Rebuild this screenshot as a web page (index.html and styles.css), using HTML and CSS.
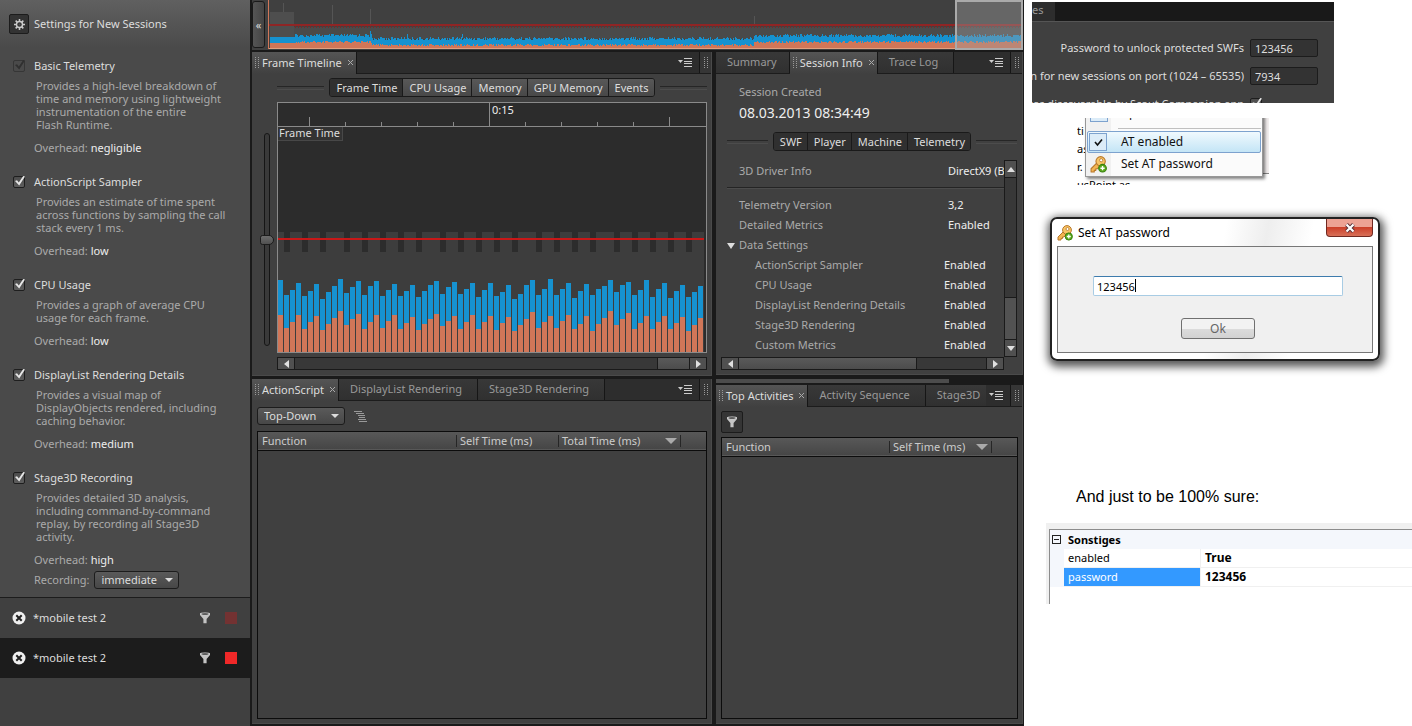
FILE: index.html
```html
<!DOCTYPE html>
<html lang="en">
<head>
    <meta charset="UTF-8">
    <meta name="viewport" content="width=device-width, initial-scale=1.0">
    <title>Session Telemetry</title>
    <link rel="stylesheet" href="styles.css">
</head>
<body>
    <svg class="defs" width="0" height="0" aria-hidden="true">
        <symbol id="gear" viewBox="0 0 12 12">
            <path d="M6 0v12M0 6h12M1.8 1.8l8.4 8.4M10.2 1.8l-8.4 8.4" stroke="#ccc" stroke-width="1.7"/>
            <circle cx="6" cy="6" r="3.3" fill="#333" stroke="#ccc" stroke-width="1.6"/>
            <circle cx="6" cy="6" r="1" fill="#555"/>
        </symbol>
        <symbol id="funnel" viewBox="0 0 12 12">
            <path d="M1 1.5h10v1.6L7.6 7v4.2H4.4V7L1 3.1z" fill="#c4c4c4"/>
            <ellipse cx="6" cy="1.8" rx="5" ry="1.4" fill="#d8d8d8"/>
            <ellipse cx="6" cy="2" rx="3.8" ry=".7" fill="#333"/>
        </symbol>
        <symbol id="remove" viewBox="0 0 14 14">
            <circle cx="7" cy="7" r="6.5" fill="#f0f0f0"/>
            <path d="M4.3 4.3l5.4 5.4M9.7 4.3L4.3 9.7" stroke="#222" stroke-width="2"/>
        </symbol>
        <symbol id="menu" viewBox="0 0 14 9">
            <path d="M0 2h5L2.500 5z" fill="#ccc"/>
            <path d="M6 .5h8M6 3.500h8M6 5.500h8M6 8.500h8" stroke="#ccc"/>
        </symbol>
        <symbol id="grip" viewBox="0 0 4 11">
            <path d="M.5 0v11M3.500 0v11" stroke="#999" stroke-dasharray="1 1"/>
        </symbol>
        <symbol id="close" viewBox="0 0 5 5">
            <path d="M0 0l5 5M5 0L0 5" stroke="#aaa"/>
        </symbol>
        <symbol id="key" viewBox="0 0 16 16">
            <path d="M6.500 6.500L1 12v3h3v-1.500h1.500V12H7l2.500-3" fill="#f3b552" stroke="#b8772a" stroke-linejoin="round"/>
            <circle cx="10" cy="5" r="4.400" fill="#f8c566" stroke="#b8772a"/>
            <circle cx="10.500" cy="4" r="1.500" fill="#fff" stroke="#b8772a" stroke-width=".8"/>
            <circle cx="11.800" cy="11.500" r="3.600" fill="#5aa91c" stroke="#36800c"/>
            <path d="M11.800 9.500v4M9.800 11.500h4" stroke="#fff" stroke-width="1.300"/>
        </symbol>
    </svg>

    <aside class="sidebar">
        <header class="sidebar-head">
            <button type="button" class="gear-button" aria-label="Settings"><svg width="11" height="11"><use href="#gear"/></svg></button>
            <span>Settings for New Sessions</span>
        </header>

        <section class="option">
            <label><input type="checkbox" class="tick" checked disabled>Basic Telemetry</label>
            <p>Provides a high-level breakdown of<br>time and memory using lightweight<br>instrumentation of the entire<br>Flash Runtime.</p>
            <div class="overhead">Overhead: <b>negligible</b></div>
        </section>
        <section class="option">
            <label><input type="checkbox" class="tick" checked>ActionScript Sampler</label>
            <p>Provides an estimate of time spent<br>across functions by sampling the call<br>stack every 1 ms.</p>
            <div class="overhead">Overhead: <b>low</b></div>
        </section>
        <section class="option">
            <label><input type="checkbox" class="tick" checked>CPU Usage</label>
            <p>Provides a graph of average CPU<br>usage for each frame.</p>
            <div class="overhead">Overhead: <b>low</b></div>
        </section>
        <section class="option">
            <label><input type="checkbox" class="tick" checked>DisplayList Rendering Details</label>
            <p>Provides a visual map of<br>DisplayObjects rendered, including<br>caching behavior.</p>
            <div class="overhead">Overhead: <b>medium</b></div>
        </section>
        <section class="option last">
            <label><input type="checkbox" class="tick" checked>Stage3D Recording</label>
            <p>Provides detailed 3D analysis,<br>including command-by-command<br>replay, by recording all Stage3D<br>activity.</p>
            <div class="overhead">Overhead: <b>high</b></div>
            <div class="recording">
                <label for="recording">Recording:</label>
                <span class="select"><select id="recording"><option>immediate</option><option>deferred</option></select></span>
            </div>
        </section>

        <ul class="sessions">
            <li>
                <button type="button" class="icon-button" aria-label="Remove"><svg width="14" height="14"><use href="#remove"/></svg></button>
                <span class="session-name">*mobile test 2</span>
                <svg width="12" height="12"><use href="#funnel"/></svg>
                <i class="record"></i>
            </li>
            <li class="active">
                <button type="button" class="icon-button" aria-label="Remove"><svg width="14" height="14"><use href="#remove"/></svg></button>
                <span class="session-name">*mobile test 2</span>
                <svg width="12" height="12"><use href="#funnel"/></svg>
                <i class="record on"></i>
            </li>
        </ul>
    </aside>

    <main class="workspace">
        <div class="overview">
            <button type="button" class="collapse" aria-label="Collapse">«</button>
            <div class="overview-chart">
                <svg id="overview" viewBox="0 0 755 50" preserveAspectRatio="none" shape-rendering="crispEdges"></svg>
                <div class="overview-window"></div>
            </div>
        </div>

        <div class="column">
            <section class="panel timeline">
                <nav class="tabs">
                    <div class="tab-list">
                        <button type="button" class="tab active"><svg width="4" height="11"><use href="#grip"/></svg>Frame Timeline<svg class="x" width="5" height="5"><use href="#close"/></svg></button>
                    </div>
                    <button type="button" class="icon-button" aria-label="Panel menu"><svg width="14" height="9"><use href="#menu"/></svg></button>
                    <span class="tab-grip"><svg width="4" height="11"><use href="#grip"/></svg></span>
                </nav>
                <div class="timeline-body">
                    <div class="slider"><input type="range" aria-label="Zoom" min="0" max="100" value="50"></div>
                    <div class="timeline-main">
                        <div class="segments wide">
                            <div class="group">
                                <button type="button" class="on">Frame Time</button>
                                <button type="button">CPU Usage</button>
                                <button type="button">Memory</button>
                                <button type="button">GPU Memory</button>
                                <button type="button">Events</button>
                            </div>
                        </div>
                        <div class="chart">
                            <div class="ruler">
                                <svg id="ruler" viewBox="0 0 428 23" preserveAspectRatio="none" shape-rendering="crispEdges"></svg>
                                <span class="time">0:15</span>
                            </div>
                            <div class="plot">
                                <svg id="frames" viewBox="0 0 428 225" preserveAspectRatio="none" shape-rendering="crispEdges"></svg>
                                <span class="chart-label">Frame Time</span>
                            </div>
                        </div>
                        <div class="hscroll right">
                            <button type="button" aria-label="Scroll left"><i class="arrow left"></i></button>
                            <span class="rail"><span class="thumb"></span></span>
                            <button type="button" aria-label="Scroll right"><i class="arrow right"></i></button>
                        </div>
                    </div>
                </div>
            </section>

            <section class="panel functions">
                <nav class="tabs">
                    <div class="tab-list">
                        <button type="button" class="tab active"><svg width="4" height="11"><use href="#grip"/></svg>ActionScript<svg class="x" width="5" height="5"><use href="#close"/></svg></button>
                        <button type="button" class="tab">DisplayList Rendering</button>
                        <button type="button" class="tab">Stage3D Rendering</button>
                    </div>
                    <button type="button" class="icon-button" aria-label="Panel menu"><svg width="14" height="9"><use href="#menu"/></svg></button>
                    <span class="tab-grip"><svg width="4" height="11"><use href="#grip"/></svg></span>
                </nav>
                <div class="toolbar">
                    <span class="select"><select aria-label="Order"><option>Top-Down</option><option>Bottom-Up</option></select></span>
                    <svg width="13" height="11" viewBox="0 0 13 11"><path d="M0 .5h8M2 2.500h8M4 4.500h7M5 6.500h6M4 8.500h8M5 10.500h8" stroke="#999"/></svg>
                </div>
                <div class="grid-frame">
                    <table>
                        <colgroup><col><col class="c102"><col class="c122"><col class="c26"></colgroup>
                        <thead><tr><th>Function</th><th>Self Time (ms)</th><th class="sorted">Total Time (ms)</th><th></th></tr></thead>
                        <tbody></tbody>
                    </table>
                </div>
            </section>
        </div>

        <div class="column">
            <section class="panel info">
                <nav class="tabs">
                    <div class="tab-list">
                        <button type="button" class="tab narrow">Summary</button>
                        <button type="button" class="tab active"><svg width="4" height="11"><use href="#grip"/></svg>Session Info<svg class="x" width="5" height="5"><use href="#close"/></svg></button>
                        <button type="button" class="tab">Trace Log</button>
                    </div>
                    <button type="button" class="icon-button" aria-label="Panel menu"><svg width="14" height="9"><use href="#menu"/></svg></button>
                    <span class="tab-grip"><svg width="4" height="11"><use href="#grip"/></svg></span>
                </nav>
                <div class="created">
                    <span>Session Created</span>
                    <strong>08.03.2013 08:34:49</strong>
                </div>
                <div class="segments dark">
                    <div class="group">
                        <button type="button">SWF</button>
                        <button type="button">Player</button>
                        <button type="button">Machine</button>
                        <button type="button">Telemetry</button>
                    </div>
                </div>
                <div class="scroll-area">
                    <div class="info-rows">
                        <table class="driver"><tbody>
                            <tr><th>3D Driver Info</th><td>DirectX9 (BGRA)</td></tr>
                        </tbody></table>
                        <table><tbody>
                            <tr><th>Telemetry Version</th><td>3,2</td></tr>
                            <tr><th>Detailed Metrics</th><td>Enabled</td></tr>
                            <tr class="open"><th>Data Settings</th><td></td></tr>
                            <tr class="sub"><th>ActionScript Sampler</th><td>Enabled</td></tr>
                            <tr class="sub"><th>CPU Usage</th><td>Enabled</td></tr>
                            <tr class="sub"><th>DisplayList Rendering Details</th><td>Enabled</td></tr>
                            <tr class="sub"><th>Stage3D Rendering</th><td>Enabled</td></tr>
                            <tr class="sub"><th>Custom Metrics</th><td>Enabled</td></tr>
                        </tbody></table>
                    </div>
                    <div class="vscroll">
                        <button type="button" aria-label="Scroll up"><i class="arrow up"></i></button>
                        <span class="rail"><span class="thumb"></span></span>
                        <button type="button" aria-label="Scroll down"><i class="arrow down"></i></button>
                    </div>
                    <div class="hscroll">
                        <button type="button" aria-label="Scroll left"><i class="arrow left"></i></button>
                        <span class="rail"><span class="thumb"></span></span>
                        <button type="button" aria-label="Scroll right"><i class="arrow right"></i></button>
                    </div>
                </div>
            </section>

            <div class="tab-scroll"></div>

            <section class="panel activities">
                <nav class="tabs">
                    <div class="tab-list">
                        <button type="button" class="tab active"><svg width="4" height="11"><use href="#grip"/></svg>Top Activities<svg class="x" width="5" height="5"><use href="#close"/></svg></button>
                        <button type="button" class="tab">Activity Sequence</button>
                        <button type="button" class="tab cut">Stage3D</button>
                    </div>
                    <button type="button" class="icon-button" aria-label="Panel menu"><svg width="14" height="9"><use href="#menu"/></svg></button>
                    <span class="tab-grip"><svg width="4" height="11"><use href="#grip"/></svg></span>
                </nav>
                <div class="toolbar">
                    <button type="button" class="filter" aria-label="Filter"><svg width="12" height="12"><use href="#funnel"/></svg></button>
                </div>
                <div class="grid-frame">
                    <table>
                        <colgroup><col><col class="c102"><col class="c26"></colgroup>
                        <thead><tr><th>Function</th><th class="sorted">Self Time (ms)</th><th></th></tr></thead>
                        <tbody></tbody>
                    </table>
                </div>
            </section>
        </div>
    </main>

    <div class="notes">
        <section class="prefs">
            <div class="prefs-tabs"><span>es</span></div>
            <div class="prefs-row">
                <label for="unlock">Password to unlock protected SWFs</label>
                <input type="text" id="unlock" value="123456">
            </div>
            <div class="prefs-row">
                <label for="port">Listen for new sessions on port (1024 – 65535)</label>
                <input type="text" id="port" value="7934">
            </div>
            <div class="prefs-row">
                <label for="discover">Devices discoverable by Scout Companion app</label>
                <span class="tick-cell"><input type="checkbox" id="discover" class="tick" checked></span>
            </div>
        </section>

        <section class="tray">
            <div class="tray-text">ti<br>as<br>r.<br>usPoint as</div>
            <div class="tray-side"></div>
            <div class="menu">
                <div class="menu-item cut-item"><i class="box"></i><span>Xp</span></div>
                <hr>
                <button type="button" class="menu-item hot"><i class="box"><svg width="9" height="9" viewBox="0 0 9 9"><path d="M1 4l2.500 3L8 1.500" fill="none" stroke="#111" stroke-width="1.600"/></svg></i><span>AT enabled</span></button>
                <button type="button" class="menu-item"><svg width="17" height="17"><use href="#key"/></svg><span>Set AT password</span></button>
            </div>
        </section>

        <section class="dialog">
            <header>
                <svg width="16" height="16"><use href="#key"/></svg>
                <span>Set AT password</span>
                <button type="button" class="dialog-close" aria-label="Close"><svg width="12" height="10" viewBox="0 0 12 10"><path d="M2.500 1.500l7 7M9.500 1.500l-7 7" stroke="#5a3038" stroke-width="4"/><path d="M2.500 1.500l7 7M9.500 1.500l-7 7" stroke="#fff" stroke-width="2.200"/></svg></button>
            </header>
            <div class="dialog-body">
                <div class="field"><input type="text" aria-label="AT password" value="123456"><i class="caret"></i></div>
                <button type="button">Ok</button>
            </div>
        </section>

        <p class="note">And just to be 100% sure:</p>

        <div class="properties">
            <table>
                <colgroup><col class="c14"><col class="c137"><col></colgroup>
                <tbody>
                    <tr class="category"><td class="gutter"><i></i></td><th colspan="2">Sonstiges</th></tr>
                    <tr><td class="gutter"></td><td class="name">enabled</td><td class="value">True</td></tr>
                    <tr class="selected"><td class="gutter"></td><td class="name">password</td><td class="value">123456</td></tr>
                </tbody>
            </table>
        </div>
    </div>

    <script src="script.js"></script>
</body>
</html>
```
FILE: styles.css
```css
* {
    box-sizing: border-box;
}
body {
    margin: 0;
    min-height: 100vh;
    display: flex;
    background: #fff;
    color: #ddd;
    font-family: "Noto Sans", "Open Sans", sans-serif;
    font-size: 11px;
    line-height: 16px;
}
.defs {
    position: absolute;
}
svg {
    display: block;
    flex: none;
}
button, select, input {
    font: inherit;
    color: inherit;
    margin: 0;
}
button {
    padding: 0;
    border: 0;
    background: none;
    cursor: pointer;
}
.icon-button {
    flex: none;
}

/* sidebar */
.sidebar {
    flex: none;
    width: 250px;
    background: #404040;
}
.sidebar-head {
    display: flex;
    align-items: center;
    gap: 5px;
    height: 48px;
    padding-left: 9px;
    background: linear-gradient(#606060, #4a4a4a);
}
.gear-button {
    display: flex;
    align-items: center;
    justify-content: center;
    width: 20px;
    height: 20px;
    border: 1px solid #1c1c1c;
    border-radius: 2px;
    background: #333;
}
.option {
    padding: 0 0 18px 34px;
    background: #4a4a4a;
    color: #aaa;
}
.sidebar-head + .option {
    padding-top: 10px;
}
.option.last {
    padding-bottom: 7px;
    border-bottom: 1px solid #1c1c1c;
}
.option > label {
    display: flex;
    align-items: center;
    gap: 9px;
    margin-left: -21px;
    color: #ddd;
}
.option p {
    margin: 5px 0 9px 2px;
    line-height: 13px;
}
.overhead b {
    font-weight: normal;
    color: #eee;
}
.tick {
    appearance: none;
    flex: none;
    position: relative;
    width: 12px;
    height: 12px;
    border: 1px solid #1e1e1e;
    border-radius: 2px;
    background: linear-gradient(#4c4c4c, #5e5e5e);
}
.tick:checked::after {
    content: "";
    position: absolute;
    left: 1px;
    top: -1px;
    width: 10px;
    height: 10px;
    background: #e6e6e6;
    clip-path: polygon(0 50%, 20% 42%, 38% 66%, 82% 0, 100% 4%, 42% 95%);
}
.tick:disabled {
    border-color: #363636;
    background: #4a4a4a;
}
.tick:disabled::after {
    background: #303030;
}
.recording {
    display: flex;
    align-items: center;
    gap: 5px;
    height: 20px;
    margin-top: 2px;
}
.select {
    position: relative;
    display: inline-flex;
}
.select select {
    appearance: none;
    width: 85px;
    height: 18px;
    padding: 0 6px;
    border: 1px solid #1c1c1c;
    border-radius: 3px;
    background: linear-gradient(#5a5a5a, #474747);
    color: #ddd;
    line-height: 14px;
}
.select::after {
    content: "";
    position: absolute;
    right: 6px;
    top: 7px;
    border: 4px solid transparent;
    border-top-color: #ddd;
    border-bottom: 0;
}
.sessions {
    margin: 0;
    padding: 0;
    list-style: none;
}
.sessions li {
    display: flex;
    align-items: center;
    height: 40px;
    padding: 0 13px 0 12px;
}
.sessions .active {
    background: #1c1c1c;
}
.session-name {
    flex: 1;
    margin-left: 7px;
}
.record {
    width: 12px;
    height: 12px;
    margin-left: 14px;
    background: #733232;
}
.record.on {
    background: #f02828;
}

/* workspace */
.workspace {
    flex: 1;
    min-width: 0;
    display: grid;
    grid-template: auto 1fr / minmax(0, 1fr) 307px;
    column-gap: 4px;
    padding: 0 1px 2px 2px;
    background: #1a1a1a;
}
.overview {
    grid-column: 1 / -1;
    display: flex;
    height: 50px;
    gap: 3px;
    background: #404040;
}
.collapse {
    width: 13px;
    height: 47px;
    margin-top: 1px;
    border: 1px solid #1a1a1a;
    border-radius: 3px;
    background: linear-gradient(90deg, #555, #444);
}
.overview-chart {
    flex: 1;
    position: relative;
}
.overview-chart svg, .ruler svg, .plot svg {
    width: 100%;
    height: 100%;
}
.overview-window {
    position: absolute;
    inset: 0 0 0 auto;
    width: 9%;
    border: 2px solid #aaa;
    background: rgba(160, 160, 160, 0.4);
}
.column {
    display: flex;
    flex-direction: column;
    min-width: 0;
    padding-top: 2px;
}
.panel {
    border-right: 1px solid #4a4a4a;
    border-bottom: 1px solid #4a4a4a;
    background: #404040;
}
.tabs {
    flex: none;
    display: flex;
    align-items: center;
    height: 22px;
    background: #2d2d2d;
    border-bottom: 1px solid #1c1c1c;
}
.tab-list {
    display: flex;
    flex: 1;
    min-width: 0;
    height: 22px;
    overflow: hidden;
}
.tab {
    flex: none;
    display: flex;
    align-items: center;
    padding: 0 15px 0 11px;
    height: 21px;
    border-right: 1px solid #161616;
    background: linear-gradient(#383838, #303030);
    color: #999;
    white-space: nowrap;
}
.tab.narrow {
    padding-right: 12px;
}
.tab.cut {
    border-right: 0;
    padding-right: 6px;
}
.tab.active {
    gap: 3px;
    height: 22px;
    padding: 0 3px;
    background: linear-gradient(#555, #404040);
    color: #ddd;
}
.tab .x {
    margin-left: 3px;
}
.tab-grip {
    display: flex;
    align-items: center;
    height: 21px;
    margin-left: 7px;
    padding: 0 3px 0 4px;
    border-left: 1px solid #161616;
    background: #363636;
}

/* timeline panel */
.timeline {
    margin-bottom: 3px;
}
.timeline-body {
    display: flex;
    padding: 4px 4px 5px 5px;
}
.slider {
    width: 20px;
    padding: 55px 0 0 3px;
}
.slider input {
    appearance: none;
    display: block;
    writing-mode: vertical-lr;
    width: 14px;
    height: 213px;
    background: none;
}
.slider input::-webkit-slider-runnable-track {
    width: 6px;
    border: 1px solid #161616;
    border-radius: 3px;
    background: #3a3a3a;
}
.slider input::-webkit-slider-thumb {
    appearance: none;
    width: 14px;
    height: 10px;
    margin-right: -5px;
    margin-left: -5px;
    border: 1px solid #1c1c1c;
    border-radius: 3px 6px 6px 3px;
    background: linear-gradient(#6c6c6c, #505050);
}
.timeline-main {
    flex: 1;
    min-width: 0;
}
.segments {
    display: flex;
    align-items: center;
    gap: 5px;
}
.segments::before, .segments::after {
    content: "";
    flex: 1;
    height: 2px;
    border-top: 1px solid #262626;
    border-bottom: 1px solid #4c4c4c;
}
.group {
    display: flex;
    border: 1px solid #1a1a1a;
    border-radius: 3px;
    overflow: hidden;
}
.group button {
    height: 17px;
    padding: 0 5px 0 6px;
    border-right: 1px solid #1a1a1a;
    background: linear-gradient(#585858, #484848);
}
.group button:last-child {
    border-right: 0;
}
.group .on, .dark .group button {
    background: #303030;
}
.chart {
    margin-top: 5px;
    border: 1px solid #8a8a8a;
}
.ruler {
    position: relative;
    height: 24px;
    border-bottom: 1px solid #8a8a8a;
    background: #2c2c2c;
}
.time {
    position: absolute;
    left: 50%;
    top: 0;
    line-height: 14px;
    color: #eee;
}
.plot {
    position: relative;
    height: 225px;
    background: #2c2c2c;
}
.chart-label {
    position: absolute;
    left: 0;
    top: 0;
    padding: 0 2px 0 1px;
    height: 14px;
    line-height: 12px;
    border: solid #484848;
    border-width: 0 1px 1px 0;
    background: #333;
}
.hscroll, .vscroll {
    display: flex;
    border: 1px solid #1a1a1a;
    background: #383838;
}
.hscroll {
    height: 13px;
}
.timeline .hscroll {
    margin-top: 4px;
}
.vscroll {
    flex-direction: column;
    width: 13px;
}
.hscroll button, .vscroll button {
    flex: none;
    display: flex;
    align-items: center;
    justify-content: center;
    background: #505050;
}
.hscroll button {
    width: 16px;
}
.vscroll button {
    height: 16px;
}
.rail {
    flex: 1;
    display: flex;
    border: solid #1a1a1a;
    border-width: 0 1px;
}
.vscroll .rail {
    flex-direction: column;
    justify-content: flex-end;
    border-width: 1px 0;
}
.thumb {
    width: 72%;
    border-right: 1px solid #1a1a1a;
    background: linear-gradient(#5a5a5a, #4c4c4c);
}
.right .rail {
    justify-content: flex-end;
}
.right .thumb {
    width: 8%;
    border-right: 0;
    border-left: 1px solid #1a1a1a;
}
.vscroll .thumb {
    width: auto;
    height: 26%;
    border-right: 0;
    border-top: 1px solid #1a1a1a;
    background: #525252;
}
.arrow {
    border: 4px solid transparent;
}
.arrow.left {
    border-right: 5px solid #e0e0e0;
    border-left: 0;
}
.arrow.right {
    border-left: 5px solid #e0e0e0;
    border-right: 0;
}
.arrow.up {
    border-bottom: 5px solid #e0e0e0;
    border-top: 0;
}
.arrow.down {
    border-top: 5px solid #e0e0e0;
    border-bottom: 0;
}

/* lower panels */
.functions, .activities {
    flex: 1;
    display: flex;
    flex-direction: column;
}
.toolbar {
    display: flex;
    align-items: center;
    gap: 9px;
    padding: 6px 5px;
}
.functions .select select {
    width: 88px;
}
.filter {
    display: flex;
    align-items: center;
    justify-content: center;
    width: 22px;
    height: 22px;
    border: 1px solid #1c1c1c;
    border-radius: 2px;
    background: #353535;
}
.activities .toolbar {
    padding-top: 4px;
    padding-bottom: 4px;
}
.grid-frame {
    flex: 1;
    margin: 0 4px 4px 5px;
    border: 1px solid #0c0c0c;
}
table {
    width: 100%;
    border-collapse: collapse;
    table-layout: fixed;
}
th, td {
    padding: 0;
    text-align: left;
    font-weight: normal;
    white-space: nowrap;
}
.c14 {
    width: 14px;
}
.c26 {
    width: 26px;
}
.c102 {
    width: 102px;
}
.c122 {
    width: 122px;
}
.c137 {
    width: 137px;
}
.grid-frame thead {
    background: linear-gradient(#585858, #464646);
    border-bottom: 1px solid #0c0c0c;
}
.grid-frame th {
    height: 18px;
    padding-left: 4px;
    color: #ccc;
    background: linear-gradient(#262626, #262626) no-repeat left center / 1px 12px;
}
.grid-frame th:first-child {
    background: none;
}
.sorted::after {
    content: "";
    float: right;
    margin: 5px 3px 0 0;
    border: 6px solid transparent;
    border-top-color: #aaa;
    border-bottom: 0;
}

/* session info */
.info {
    margin-bottom: 4px;
    padding-bottom: 4px;
}
.created {
    display: flex;
    flex-direction: column;
    gap: 4px;
    padding: 10px 0 10px 23px;
    color: #aaa;
}
.created strong {
    font-size: 14px;
    line-height: 18px;
    font-weight: normal;
    color: #eee;
}
.info .segments {
    padding: 0 5px 0 11px;
}
.scroll-area {
    display: grid;
    grid-template-columns: 1fr 13px;
    margin: 9px 5px 0;
}
.info-rows {
    height: 197px;
    padding-left: 6px;
    overflow: hidden;
}
.info-rows th {
    width: 221px;
    height: 20px;
    padding-left: 12px;
    color: #aaa;
}
.info-rows td {
    color: #eee;
}
.driver {
    height: 28px;
    margin-bottom: 7px;
    border-bottom: 1px solid #242424;
    box-shadow: 0 1px #4c4c4c;
}
.driver th, .driver td {
    padding-bottom: 5px;
}
.info-rows .open th {
    padding-left: 0;
}
.open th::before {
    content: "";
    display: inline-block;
    margin-right: 4px;
    border: 4px solid transparent;
    border-top: 6px solid #ddd;
    border-bottom: 0;
}
.info-rows .sub th {
    padding-left: 28px;
}
.info-rows .sub td {
    position: relative;
    left: -4px;
}
.tab-scroll {
    width: 76%;
    height: 4px;
    margin-bottom: 2px;
    background: #4c4c4c;
}

/* notes */
.notes {
    flex: none;
    width: 388px;
    padding-top: 2px;
    color: #000;
}
.prefs {
    width: 302px;
    height: 101px;
    margin-left: 8px;
    overflow: hidden;
    background: #404040;
    color: #ddd;
}
.prefs-tabs {
    height: 20px;
    margin-bottom: 17px;
    border-bottom: 1px solid #555;
    background: #191919;
}
.prefs-tabs span {
    display: block;
    width: 23px;
    height: 19px;
    background: #2d2d2d;
    color: #999;
}
.prefs-row {
    display: flex;
    align-items: center;
    justify-content: flex-end;
    gap: 6px;
    height: 18px;
    margin: 0 16px 10px 0;
    white-space: nowrap;
}
.prefs-row > input, .tick-cell {
    width: 68px;
    height: 18px;
    flex: none;
}
.prefs-row > input {
    padding: 0 4px;
    border: 1px solid #1c1c1c;
    border-radius: 2px;
    background: #333;
}
.tick-cell {
    display: flex;
    align-items: center;
}
.tray {
    position: relative;
    display: flex;
    justify-content: space-between;
    width: 192px;
    height: 67px;
    margin: 15px 0 0 53px;
    overflow: hidden;
    font-size: 12px;
}
.tray-text {
    padding-top: 4px;
    font-size: 11px;
    line-height: 18px;
}
.tray-side {
    width: 10px;
    height: 56px;
    border-bottom: 1px solid #888;
    background: #f2eeee;
}
.menu {
    position: absolute;
    left: 8px;
    bottom: 8px;
    width: 178px;
    padding: 1px;
    border: 1px solid #979797;
    background: linear-gradient(90deg, #f1f1f1 25px, #fbfbfb 25px);
    box-shadow: 2px 2px 3px rgba(0, 0, 0, 0.5);
}
.menu hr {
    height: 1px;
    margin: 4px 0 2px 31px;
    border: 0;
    background: #c0c0c0;
}
.menu-item {
    display: flex;
    align-items: center;
    gap: 14px;
    width: 100%;
    height: 22px;
    padding-left: 2px;
    border: 1px solid transparent;
    border-radius: 2px;
    color: #111;
}
.menu-item.hot {
    padding-left: 1px;
    border-color: #7da2ce;
    background: linear-gradient(#f0f9fe, #c4e5f6);
}
.box {
    display: flex;
    align-items: center;
    justify-content: center;
    width: 18px;
    height: 18px;
    border: 1px solid #7da2ce;
    background: #dcecf8;
}
.dialog {
    width: 330px;
    margin: 32px 0 0 26px;
    padding: 0 5px 6px;
    border: 2px solid #222;
    border-radius: 7px;
    background: linear-gradient(100deg, #fff 50%, #eee 62%, #fff 75%);
    box-shadow: 1px 3px 9px 3px rgba(0, 0, 0, 0.65);
    font-size: 12px;
}
.dialog header {
    display: flex;
    align-items: center;
    gap: 5px;
    height: 27px;
}
.dialog-close {
    display: flex;
    align-items: center;
    justify-content: center;
    align-self: flex-start;
    width: 47px;
    height: 18px;
    margin-left: auto;
    border: 1px solid #702820;
    border-top: 0;
    border-radius: 0 0 4px 4px;
    background: linear-gradient(#eda294 45%, #cc402a 50%, #d87058);
}
.dialog-body {
    display: flex;
    flex-direction: column;
    align-items: center;
    gap: 22px;
    height: 107px;
    padding: 29px 0 0 6px;
    border: 1px solid #777;
    background: #f0f0f0;
}
.field {
    position: relative;
}
.field input {
    display: block;
    width: 250px;
    height: 20px;
    padding: 0 3px;
    border: 1px solid #a8cce4;
    border-top-color: #3d7bad;
    border-radius: 2px;
    background: #fff;
    color: #000;
    font-size: 11px;
}
.caret {
    position: absolute;
    left: 42px;
    top: 3px;
    width: 1px;
    height: 13px;
    background: #000;
}
.dialog-body button {
    width: 74px;
    height: 21px;
    border: 1px solid #707070;
    border-radius: 3px;
    background: linear-gradient(#f2f2f2 50%, #dcdcdc 50%, #d2d2d2);
    color: #666;
}
.note {
    margin: 126px 0 16px 52px;
    font: 16px/20px "Liberation Sans", Arial, sans-serif;
}
.properties {
    height: 81px;
    margin-left: 22px;
    padding: 6px 0 0 3px;
    overflow: hidden;
    background: linear-gradient(#8c8c8c, #8c8c8c) no-repeat 3px 6px / 1px 100%, linear-gradient(#fff, #fff) no-repeat 4px 6px, #f0f0f0;
}
.properties table {
    border-top: 1px solid #8c8c8c;
    border-left: 1px solid #8c8c8c;
    border-collapse: separate;
    border-spacing: 0;
}
.properties td, .properties th {
    height: 19px;
}
.properties .gutter, .properties th {
    background: #f4f7fc;
}
.gutter i {
    display: block;
    width: 9px;
    height: 9px;
    margin-left: 2px;
    border: 1px solid #222;
    background: linear-gradient(#222, #222) no-repeat center / 5px 1px;
}
.properties th {
    padding-left: 4px;
    font-weight: bold;
}
.properties td.name {
    padding-left: 4px;
    border: solid #f0f0f0;
    border-width: 0 1px 1px 0;
}
.properties td.value {
    padding-left: 4px;
    border-bottom: 1px solid #f0f0f0;
    font-weight: bold;
    font-size: 12px;
}
.properties .selected .name {
    background: #3399ff;
    color: #fff;
}
```
FILE: script.js
```js
var BLUE = '#1692d0';
var ORANGE = '#d07658';

function rect(x, y, w, h, fill) {
    return '<rect x="' + x + '" y="' + y + '" width="' + w + '" height="' + h + '" fill="' + fill + '"/>';
}

// Frame chart: one blue bar (total) with an orange bar in front (script time)
var total = [
    72, 57, 62, 69, 56, 61, 68, 53, 60, 66, 73, 59, 65, 71, 57, 66, 71, 56, 62, 68,
    56, 61, 67, 55, 61, 67, 71, 58, 65, 70, 58, 63, 69, 55, 62, 69, 56, 60, 67, 53,
    58, 67, 72, 57, 63, 73, 57, 63, 69, 54, 61, 68, 57, 63, 66, 72, 60, 67, 70, 57,
    62, 72, 55, 63, 69, 54, 61, 67, 55, 60, 66
];
var scripted = [
    37, 24, 30, 37, 23, 30, 36, 22, 28, 34, 41, 27, 33, 38, 23, 30, 37, 24, 31, 37,
    23, 29, 35, 22, 28, 33, 38, 26, 31, 36, 23, 30, 37, 23, 30, 36, 22, 29, 35, 21,
    27, 33, 40, 24, 30, 36, 24, 31, 37, 23, 28, 36, 21, 28, 34, 41, 27, 33, 39, 23,
    29, 36, 23, 30, 36, 23, 29, 35, 21, 27, 34
];
var shortFrames = [1, 4, 7, 11, 14, 17, 20, 23, 27, 30, 33, 36, 39, 43, 46, 49, 52, 56, 59, 62, 65, 68];

var frames = rect(0, 105, 426, 120, '#3d3d3d');
shortFrames.forEach(function (i) {
    frames += rect(i * 6, 105, 6, 20, '#2c2c2c');
});
for (var i = 0; i < total.length; i++) {
    frames += rect(i * 6, 225 - total[i], 5, total[i], BLUE);
    frames += rect(i * 6, 225 - scripted[i], 5, scripted[i], ORANGE);
}
frames += rect(0, 111, 426, 2, '#c81818');
document.getElementById('frames').innerHTML = frames;

// Ruler ticks, every fifth one is longer
var ticks = '';
for (var t = 0; t < 11; t++) {
    var h = t === 5 ? 23 : (t % 5 === 0 ? 9 : 4);
    ticks += rect(31 + t * 36, 23 - h, 1, h, '#8a8a8a');
}
document.getElementById('ruler').innerHTML = ticks;

// Whole session overview
function noise(n) {
    var v = Math.sin(n * 12.9898) * 43758.5453;
    return v - Math.floor(v);
}

var overview = rect(2, 12, 24, 25, '#4e4e4e') + rect(26, 27, 729, 12, '#4a4a4a');
[[15, 3, 9], [64, 5, 19], [102, 9, 15], [486, 16, 10]].forEach(function (s) {
    overview += rect(s[0], s[1], 1, s[2], '#555');
});
for (var x = 2; x < 755; x++) {
    var busy = (x > 26 && x < 104) || x > 485;
    var peak = x <= 26 ? 37 : (busy ? 34 : 37) + Math.round(noise(x) * 3);
    var split = x <= 26 ? 43 : (busy ? 41 : 44) + Math.round(noise(x + 900) * 2);
    overview += rect(x, peak, 1, split - peak, BLUE) + rect(x, split, 1, 48 - split, ORANGE);
    if (x > 26 && x % 3 === 0) {
        overview += rect(x, 26, 1, 2, '#6e2c2c');
    }
}
overview += rect(102, 31, 1, 8, BLUE) + rect(194, 34, 1, 4, BLUE) + rect(139, 34, 1, 4, BLUE);
overview += rect(0, 24, 755, 2, '#8f2525') + rect(0, 48, 755, 1, '#e0a080') + rect(0, 0, 1, 49, ORANGE);
document.getElementById('overview').innerHTML = overview;
```
